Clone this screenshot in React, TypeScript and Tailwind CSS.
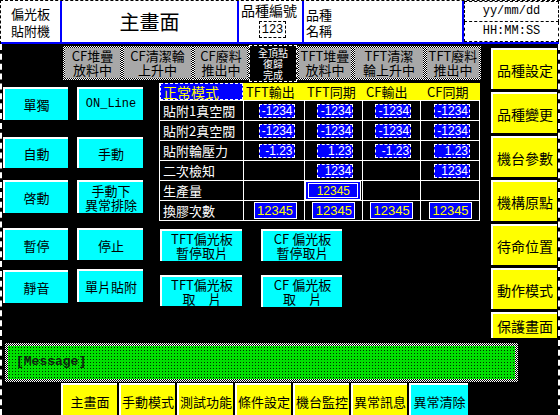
import React from "react";

type Cell = { v: string; kind: "dash" | "solid" | "wide" } | null;

const dash = (v: string): Cell => ({ v, kind: "dash" });
const solid = (v: string): Cell => ({ v, kind: "solid" });

const ROWS: { label: string; cells: Cell[] }[] = [
  { label: "貼附1真空閥", cells: [dash("-1234"), dash("-1234"), dash("-1234"), dash("-1234")] },
  { label: "貼附2真空閥", cells: [dash("-1234"), dash("-1234"), dash("-1234"), dash("-1234")] },
  { label: "貼附輪壓力", cells: [dash("-1.23"), dash("1.23"), dash("-1.23"), dash("1.23")] },
  { label: "二次檢知", cells: [null, dash("1234"), null, dash("1234")] },
  { label: "生產量", cells: [null, { v: "12345", kind: "wide" }, null, null] },
  { label: "換膠次數", cells: [solid("12345"), solid("12345"), solid("12345"), solid("12345")] },
];

const COLS = ["w-[61px]", "w-[59px]", "w-[58px]", "w-[59px]"];

const LAMPS = [
  { w: "w-[59px]", t: "CF堆疊\n放料中" },
  { w: "w-[71px]", t: "CF清潔輪\n上升中" },
  { w: "w-[56px]", t: "CF廢料\n推出中" },
  { w: "w-[48px]", t: "全頂點\n復歸\n完成", done: true },
  { w: "w-[56px]", t: "TFT堆疊\n放料中" },
  { w: "w-[72px]", t: "TFT清潔\n輪上升中" },
  { w: "w-[56px]", t: "TFT廢料\n推出中" },
];

const SIDE = ["品種設定", "品種變更", "機台參數", "機構原點", "待命位置", "動作模式"];

const NAV = ["主畫面", "手動模式", "測試功能", "條件設定", "機台監控", "異常訊息"];

function Btn({ className, children }: { className: string; children: React.ReactNode }) {
  return (
    <div
      className={`flex items-center justify-center whitespace-pre-line border-t-2 border-l-2 border-white text-center text-black ${className}`}
    >
      {children}
    </div>
  );
}

function Value({ c }: { c: Cell }) {
  if (!c) return null;
  if (c.kind === "dash")
    return (
      <div className="flex h-[14px] w-[36px] items-center justify-end border border-dashed border-white bg-[#0000ff] pr-[1px] font-['Liberation_Sans',sans-serif] text-[12px] leading-[12px] text-white">
        {c.v}
      </div>
    );
  if (c.kind === "solid")
    return (
      <div className="flex h-[17px] w-[43px] items-center justify-center border border-white bg-[#0000ff] font-['Liberation_Sans',sans-serif] text-[13px] leading-[13px] text-[#ffff00]">
        {c.v}
      </div>
    );
  return (
    <div className="h-[19px] w-[56px] border border-white bg-[#0000ff] px-[2px] py-[1px]">
      <div className="flex h-full items-center justify-center border border-white font-['Liberation_Sans',sans-serif] text-[12px] leading-[12px] text-[#ffff00]">
        {c.v}
      </div>
    </div>
  );
}

export default function App() {
  return (
    <div className="flex h-[415px] w-[560px] flex-col overflow-hidden bg-black font-['Noto_Sans_CJK_TC','Noto_Sans_CJK_JP',sans-serif] text-[13px]">
      {/* header */}
      <header className="flex h-[44px] shrink-0 border-t border-l border-dashed border-black bg-white">
        <div className="flex w-[61px] items-center justify-center whitespace-pre-line border-r-2 border-b-2 border-[#0000ff] text-center text-[13px] leading-[17px] text-black">
          {"偏光板\n貼附機"}
        </div>
        <div className="flex w-[177px] items-center justify-center border-r-2 border-b-2 border-[#0000ff] text-[20px] text-black">
          主畫面
        </div>
        <div className="flex w-[65px] flex-col overflow-hidden border-r-2 border-b-2 border-[#0000ff] pl-[2px] text-black">
          <span className="whitespace-nowrap text-[14px] leading-[18px]">品種編號</span>
          <div className="mt-[2px] ml-[18px] flex h-[17px] w-[27px] items-center justify-center border border-dashed border-black font-['Liberation_Mono',monospace] text-[12px]">
            123
          </div>
        </div>
        <div className="w-[160px] whitespace-pre-line border-r-2 border-b-2 border-[#0000ff] pt-[6px] pl-[2px] text-[13px] leading-[16px] text-black">
          {"品種\n名稱"}
        </div>
        <div className="flex w-[95px] flex-col border-b-2 border-[#0000ff] font-['Liberation_Mono',monospace] text-[12px] text-black">
          <div className="flex h-[21px] items-center justify-center border border-dashed border-black">yy/mm/dd</div>
          <div className="flex h-[21px] items-center justify-center border border-t-0 border-dashed border-black">HH:MM:SS</div>
        </div>
      </header>

      <div className="flex flex-1 flex-col border-x-2 border-dashed border-white">
        {/* middle */}
        <div className="flex h-[299px]">
          <div className="flex w-[488px] flex-col">
            {/* lamps */}
            <div className="mt-[1px] flex h-[38px] items-start pl-[61px]">
              {LAMPS.map((l) =>
                l.done ? (
                  <div
                    key={l.t}
                    className={`${l.w} flex h-[37px] flex-col items-center justify-center whitespace-pre-line border border-dashed border-white bg-black text-center text-[10px] leading-[11px] text-white`}
                  >
                    {l.t}
                  </div>
                ) : (
                  <div
                    key={l.t}
                    className={`${l.w} mt-[1px] h-[34px] bg-[image:repeating-conic-gradient(#fff_0_25%,#000_0_50%)] bg-[length:2px_2px] p-[2px]`}
                  >
                    <div className="flex h-full items-center justify-center whitespace-pre-line bg-[#a8a8a8] text-center text-[13px] leading-[14px] text-black">
                      {l.t}
                    </div>
                  </div>
                ),
              )}
            </div>

            <div className="flex">
              {/* left buttons */}
              <div className="flex flex-col pl-[1px] text-[13px] leading-[15px]">
                <div className="mt-[4px] flex gap-[9px]">
                  <Btn className="h-[33px] w-[65px] bg-[#00ffff]">單獨</Btn>
                  <Btn className="h-[33px] w-[66px] bg-[#00ffff] font-['Liberation_Mono',monospace] text-[12px]">ON_Line</Btn>
                </div>
                <div className="mt-[17px] flex gap-[9px]">
                  <Btn className="h-[31px] w-[65px] bg-[#00ffff]">自動</Btn>
                  <Btn className="h-[31px] w-[66px] bg-[#00ffff]">手動</Btn>
                </div>
                <div className="mt-[12px] flex gap-[9px]">
                  <Btn className="h-[33px] w-[65px] bg-[#00ffff]">啓動</Btn>
                  <Btn className="h-[33px] w-[66px] bg-[#00ffff] leading-[14px]">{"手動下\n異常排除"}</Btn>
                </div>
                <div className="mt-[15px] flex gap-[9px]">
                  <Btn className="h-[32px] w-[65px] bg-[#00ffff]">暫停</Btn>
                  <Btn className="h-[32px] w-[66px] bg-[#00ffff]">停止</Btn>
                </div>
                <div className="mt-[10px] flex gap-[9px]">
                  <Btn className="h-[33px] w-[65px] bg-[#00ffff]">靜音</Btn>
                  <Btn className="-mt-[1px] h-[33px] w-[66px] bg-[#00ffff]">單片貼附</Btn>
                </div>
              </div>

              {/* table + bottom buttons */}
              <div className="ml-[16px] flex flex-col">
                <div className="w-[321px] border-l border-white">
                  <div className="flex h-[18px] border-b border-white">
                    <div className="flex w-[84px] items-center border border-dashed border-white bg-[#0000ff] pl-[2px] text-[14px] leading-[14px] text-[#ffff00]">
                      正常模式
                    </div>
                    <div className="flex flex-1 items-center bg-[#ffff00] text-[13px] text-black">
                      <span className="w-[61px] pl-[3px]">TFT輸出</span>
                      <span className="w-[59px] pl-[3px]">TFT同期</span>
                      <span className="w-[58px] pl-[3px]">CF輸出</span>
                      <span className="w-[59px] pl-[6px]">CF同期</span>
                    </div>
                  </div>
                  {ROWS.map((r) => (
                    <div key={r.label} className="flex h-[20px] border-b border-white">
                      <div className="flex w-[84px] items-center border-r border-white pl-[3px] text-[13px] text-white">
                        {r.label}
                      </div>
                      {r.cells.map((c, i) => (
                        <div
                          key={i}
                          className={`${COLS[i]} flex items-center justify-end border-r border-white ${
                            c && c.kind === "wide" ? "pr-[1px]" : c && c.kind === "solid" ? "pr-[7px]" : "pr-[9px]"
                          }`}
                        >
                          <Value c={c} />
                        </div>
                      ))}
                    </div>
                  ))}
                </div>

                <div className="mt-[8px] flex gap-[19px] pl-[1px] text-[13px] leading-[14px]">
                  <Btn className="h-[32px] w-[82px] bg-[#00ffff]">{"TFT偏光板\n暫停取片"}</Btn>
                  <Btn className="h-[32px] w-[81px] bg-[#00ffff]">{"CF 偏光板\n暫停取片"}</Btn>
                </div>
                <div className="mt-[14px] flex gap-[19px] pl-[1px] text-[13px] leading-[14px]">
                  <Btn className="h-[31px] w-[82px] bg-[#00ffff]">{"TFT偏光板\n取　片"}</Btn>
                  <Btn className="h-[32px] w-[81px] bg-[#00ffff]">{"CF 偏光板\n取　片"}</Btn>
                </div>
              </div>
            </div>
          </div>

          {/* right side */}
          <div className="ml-[1px] flex w-[66px] flex-col gap-[3px] pt-[4px] text-[14px]">
            {SIDE.map((s) => (
              <Btn key={s} className="h-[41px] w-full bg-[#ffff00] pt-[2px]">
                {s}
              </Btn>
            ))}
            <Btn className="h-[26px] w-full bg-[#ffff00]">保護畫面</Btn>
          </div>
        </div>

        {/* message */}
        <div className="ml-[3px] h-[39px] w-[513px] bg-[image:repeating-conic-gradient(#fff_0_25%,#000_0_50%)] bg-[length:2px_2px] p-[3px]">
          <div className="h-full bg-[#00e000] bg-[image:radial-gradient(circle,#003000_0.8px,transparent_1px)] bg-[length:3px_3px] pt-[4px] pl-[8px]">
            <span className="font-['Liberation_Mono',monospace] text-[13px] font-bold text-[#102010]">[Message]</span>
          </div>
        </div>

        {/* nav */}
        <div className="mt-[1px] flex h-[32px] gap-[2px] pl-[59px] text-[13px]">
          {NAV.map((n) => (
            <Btn key={n} className="h-full w-[56px] bg-[#ffff00] pt-[4px]">
              {n}
            </Btn>
          ))}
          <Btn className="h-full w-[59px] bg-[#00ffff] pt-[4px] text-[#d8d8d8]">異常清除</Btn>
        </div>
      </div>
    </div>
  );
}
